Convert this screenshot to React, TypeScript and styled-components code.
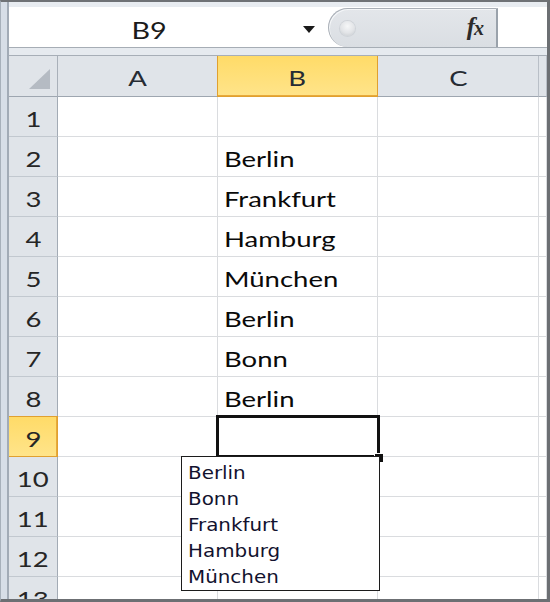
import React from 'react';
import styled, { createGlobalStyle } from 'styled-components';

const GlobalStyle = createGlobalStyle`
  html, body { margin: 0; padding: 0; background: #ffffff; }
  body { width: 550px; height: 602px; overflow: hidden; font-family: "Lato", "Liberation Sans", sans-serif; }
  *, *::before, *::after { box-sizing: border-box; }
`;

const Frame = styled.div`
  width: 550px;
  height: 602px;
  display: flex;
  border-top: 2px solid #6f7276;
  border-right: 3px solid #6c6f73;
  border-bottom: 3px solid #6c6f73;
  border-left: 1px solid #a7b0ba;
  overflow: hidden;
  background: #ffffff;
`;

const SideRail = styled.div`
  flex: none;
  width: 8px;
  background: #d7dee7;
  border-right: 2px solid #a2abb6;
`;

const Workspace = styled.div`
  position: relative;
  flex: 1;
  min-width: 0;
  display: flex;
  flex-direction: column;
  overflow: hidden;
`;

const TopBand = styled.div`
  flex: none;
  height: 5px;
  background: #e8ecf1;
`;

const FormulaBar = styled.div`
  flex: none;
  height: 40px;
  display: flex;
  background: #ffffff;
`;

const NameBox = styled.div`
  width: 281px;
  display: flex;
  align-items: center;
  justify-content: center;
  padding-top: 5px;
  font-size: 23px;
  color: #1b1b1b;
`;

const NameArrow = styled.div`
  width: 38px;
  display: flex;
  align-items: center;
  justify-content: center;
  padding-top: 5px;
`;

const Caret = styled.span`
  width: 0;
  height: 0;
  border-left: 6px solid transparent;
  border-right: 6px solid transparent;
  border-top: 7px solid #1a1a1a;
`;

const Pill = styled.div`
  width: 170px;
  margin-top: 1px;
  display: flex;
  align-items: center;
  justify-content: space-between;
  padding: 0 13px 0 11px;
  background: linear-gradient(180deg, #e3e6ea 0%, #dadee3 100%);
  border-top: 1px solid #a9afb7;
  border-left: 1px solid #a9afb7;
  border-right: 2px solid #9aa2ab;
  border-radius: 20px 0 0 20px;
  box-shadow: inset 1px 1px 0 #f4f6f8;
`;

const Grip = styled.span`
  width: 15px;
  height: 15px;
  border-radius: 50%;
  background: radial-gradient(circle at 50% 35%, #f6f7f8 0%, #e2e4e7 55%, #c3c7cc 100%);
  box-shadow: 0 0 0 1px #cfd3d8;
`;

const FxLabel = styled.span`
  font-family: "Liberation Serif", "DejaVu Serif", serif;
  font-style: italic;
  font-weight: bold;
  font-size: 25px;
  color: #2b2b2b;
  padding-bottom: 2px;
  letter-spacing: -1px;
`;

const FxSub = styled.span`
  font-size: 20px;
`;

const FormulaInput = styled.div`
  flex: 1;
  background: #ffffff;
`;

const Strip = styled.div`
  flex: none;
  height: 9px;
  background: #e6eaef;
  border-top: 1px solid #a6adb5;
  border-bottom: 1px solid #a7aeb7;
`;

const Sheet = styled.div`
  display: grid;
  grid-template-columns: 49px 160px 160px 161px 1fr;
  grid-template-rows: 41px;
  grid-auto-rows: 40px;
`;

const Corner = styled.div`
  display: flex;
  align-items: flex-end;
  justify-content: flex-end;
  padding: 0 7px 7px 0;
  background: #e0e4e9;
  border-right: 1px solid #a9b0b9;
  border-bottom: 1px solid #9ea6b0;
`;

const ColHead = styled.div<{ $active?: boolean }>`
  position: relative;
  display: flex;
  align-items: center;
  justify-content: center;
  padding-top: 3px;
  font-size: 22px;
  color: #262b33;
  background: ${(p) => (p.$active ? 'linear-gradient(180deg, #ffdb68 0%, #ffe48a 100%)' : '#e0e4e9')};
  border-right: 1px solid ${(p) => (p.$active ? '#e0a030' : '#b9bfc7')};
  border-bottom: 1px solid ${(p) => (p.$active ? '#e0a030' : '#9ea6b0')};
  box-shadow: ${(p) => (p.$active ? '-1px 0 0 #e0a030, inset 0 -1px 0 #e8aa3a' : 'none')};
`;

const RowHead = styled.div<{ $active?: boolean }>`
  display: flex;
  align-items: center;
  justify-content: center;
  padding-top: 3px;
  font-size: 22px;
  color: #262626;
  background: ${(p) => (p.$active ? 'linear-gradient(180deg, #ffdb68 0%, #ffe48a 100%)' : '#e0e4e9')};
  border-right: 1px solid ${(p) => (p.$active ? '#e0a030' : '#a3abb5')};
  border-bottom: 1px solid ${(p) => (p.$active ? '#e0a030' : '#c2c8cf')};
  box-shadow: ${(p) => (p.$active ? '0 -1px 0 #e0a030, inset -1px 0 0 #e8aa3a' : 'none')};
`;

const Cell = styled.div`
  display: flex;
  align-items: center;
  padding: 3px 0 0 6px;
  font-size: 22px;
  color: #0a0a0a;
  white-space: nowrap;
  border-right: 1px solid #dadcdf;
  border-bottom: 1px solid #dadcdf;
`;

const Stretch = styled.span<{ $scale: number; $origin?: string }>`
  display: inline-block;
  white-space: nowrap;
  transform: scaleX(${(p) => p.$scale});
  transform-origin: ${(p) => p.$origin ?? 'left center'};
`;

const Selection = styled.div`
  position: absolute;
  left: 207px;
  top: 413px;
  width: 164px;
  height: 43px;
  border: 3px solid #111111;
  pointer-events: none;
`;

const FillHandle = styled.div`
  position: absolute;
  right: -6px;
  bottom: -7px;
  width: 8px;
  height: 8px;
  background: #111111;
  box-shadow: -1px -1px 0 #ffffff;
`;

const DropList = styled.ul`
  position: absolute;
  left: 172px;
  top: 454px;
  width: 199px;
  height: 135px;
  margin: 0;
  padding: 3px 0 0 6px;
  list-style: none;
  background: #ffffff;
  border: 1px solid #1c1c1c;
`;

const DropItem = styled.li`
  height: 26px;
  line-height: 26px;
  font-family: "DejaVu Sans", "Liberation Sans", sans-serif;
  font-size: 17px;
  color: #12122e;
`;

const columns = ['A', 'B', 'C'];
const columnB = ['', 'Berlin', 'Frankfurt', 'Hamburg', 'München', 'Berlin', 'Bonn', 'Berlin', '', '', '', '', ''];
const listItems = ['Berlin', 'Bonn', 'Frankfurt', 'Hamburg', 'München'];

const TEXT_SCALE = 1.25;

export default function App() {
  return (
    <>
      <GlobalStyle />
      <Frame>
        <SideRail />
        <Workspace>
          <TopBand />
          <FormulaBar>
            <NameBox>
              <Stretch $scale={TEXT_SCALE} $origin="center">B9</Stretch>
            </NameBox>
            <NameArrow>
              <Caret />
            </NameArrow>
            <Pill>
              <Grip />
              <FxLabel>
                f<FxSub>x</FxSub>
              </FxLabel>
            </Pill>
            <FormulaInput />
          </FormulaBar>
          <Strip />
          <Sheet>
            <Corner>
              <svg width="21" height="20" viewBox="0 0 21 20">
                <polygon points="21,0 21,20 0,20" fill="#b5bbc3" />
              </svg>
            </Corner>
            {columns.map((c) => (
              <ColHead key={c} $active={c === 'B'}>
                <Stretch $scale={TEXT_SCALE} $origin="center">{c}</Stretch>
              </ColHead>
            ))}
            <ColHead />
            {columnB.map((v, i) => (
              <React.Fragment key={i}>
                <RowHead $active={i + 1 === 9}>
                  <Stretch $scale={TEXT_SCALE} $origin="center">{i + 1}</Stretch>
                </RowHead>
                <Cell />
                <Cell>{v && <Stretch $scale={TEXT_SCALE}>{v}</Stretch>}</Cell>
                <Cell />
                <Cell />
              </React.Fragment>
            ))}
          </Sheet>
          <Selection>
            <FillHandle />
          </Selection>
          <DropList>
            {listItems.map((item) => (
              <DropItem key={item}>
                <Stretch $scale={1.17}>{item}</Stretch>
              </DropItem>
            ))}
          </DropList>
        </Workspace>
      </Frame>
    </>
  );
}
